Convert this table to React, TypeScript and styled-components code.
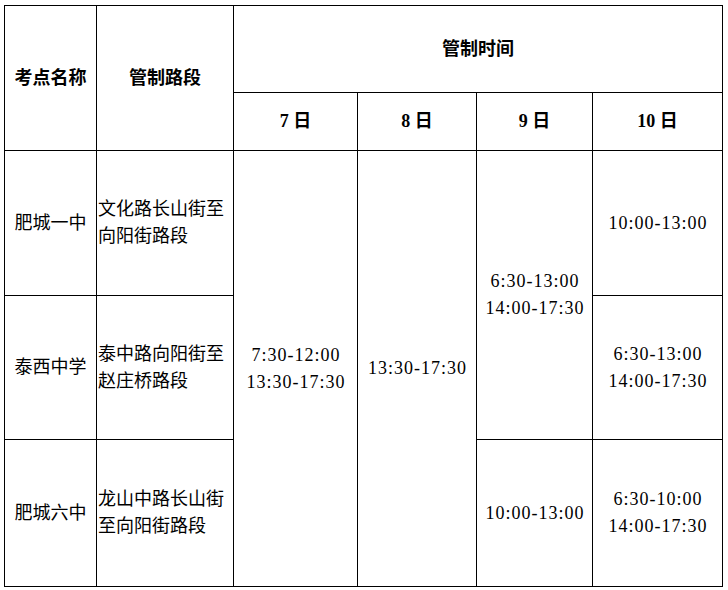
import styled, { createGlobalStyle } from 'styled-components'

const GlobalStyle = createGlobalStyle`
  html, body {
    margin: 0;
    padding: 0;
    background: #fff;
  }
  body {
    font-family: "Liberation Serif", "Noto Sans CJK SC", serif;
    color: #000;
  }
`

// lines of the table sit at x 4/96/233/357/476/592/722 and y 5/92/150/295/439/586
const Table = styled.div`
  display: grid;
  grid-template-columns: 91px 136px 123px 118px 115px 129px;
  grid-template-rows: 86px 57px 144px 143px 146px;
  gap: 1px;
  padding: 1px;
  background: #000;
  width: max-content;
  margin: 5px 0 0 4px;
`

const Cell = styled.div<{ $col: string; $row: string; $bold?: boolean; $left?: boolean }>`
  grid-column: ${(p) => p.$col};
  grid-row: ${(p) => p.$row};
  background: #fff;
  display: flex;
  flex-direction: column;
  justify-content: center;
  align-items: ${(p) => (p.$left ? 'flex-start' : 'center')};
  padding-left: ${(p) => (p.$left ? '1px' : '0')};
  font-size: 18px;
  line-height: 27px;
  font-weight: ${(p) => (p.$bold ? 700 : 400)};
  text-align: ${(p) => (p.$left ? 'left' : 'center')};
  white-space: ${(p) => (p.$left ? 'normal' : 'nowrap')};
`

const Line = styled.span`
  display: block;
  letter-spacing: 1px;
  margin-right: -1px;
`

const days = ['7 日', '8 日', '9 日', '10 日']

const schools = [
  { name: '肥城一中', road: '文化路长山街至向阳街路段' },
  { name: '泰西中学', road: '泰中路向阳街至赵庄桥路段' },
  { name: '肥城六中', road: '龙山中路长山街至向阳街路段' },
]

function Times({ lines }: { lines: string[] }) {
  return (
    <>
      {lines.map((l) => (
        <Line key={l}>{l}</Line>
      ))}
    </>
  )
}

export default function App() {
  return (
    <>
      <GlobalStyle />
      <Table>
        <Cell $col="1" $row="1 / 3" $bold>考点名称</Cell>
        <Cell $col="2" $row="1 / 3" $bold>管制路段</Cell>
        <Cell $col="3 / 7" $row="1" $bold>管制时间</Cell>
        {days.map((d, i) => (
          <Cell key={d} $col={`${i + 3}`} $row="2" $bold>{d}</Cell>
        ))}

        {schools.map((s, i) => (
          <Cell key={s.name} $col="1" $row={`${i + 3}`}>{s.name}</Cell>
        ))}
        {schools.map((s, i) => (
          <Cell key={s.road} $col="2" $row={`${i + 3}`} $left>{s.road}</Cell>
        ))}

        <Cell $col="3" $row="3 / 6">
          <Times lines={['7:30-12:00', '13:30-17:30']} />
        </Cell>
        <Cell $col="4" $row="3 / 6">
          <Times lines={['13:30-17:30']} />
        </Cell>
        <Cell $col="5" $row="3 / 5">
          <Times lines={['6:30-13:00', '14:00-17:30']} />
        </Cell>
        <Cell $col="5" $row="5">
          <Times lines={['10:00-13:00']} />
        </Cell>
        <Cell $col="6" $row="3">
          <Times lines={['10:00-13:00']} />
        </Cell>
        <Cell $col="6" $row="4">
          <Times lines={['6:30-13:00', '14:00-17:30']} />
        </Cell>
        <Cell $col="6" $row="5">
          <Times lines={['6:30-10:00', '14:00-17:30']} />
        </Cell>
      </Table>
    </>
  )
}
